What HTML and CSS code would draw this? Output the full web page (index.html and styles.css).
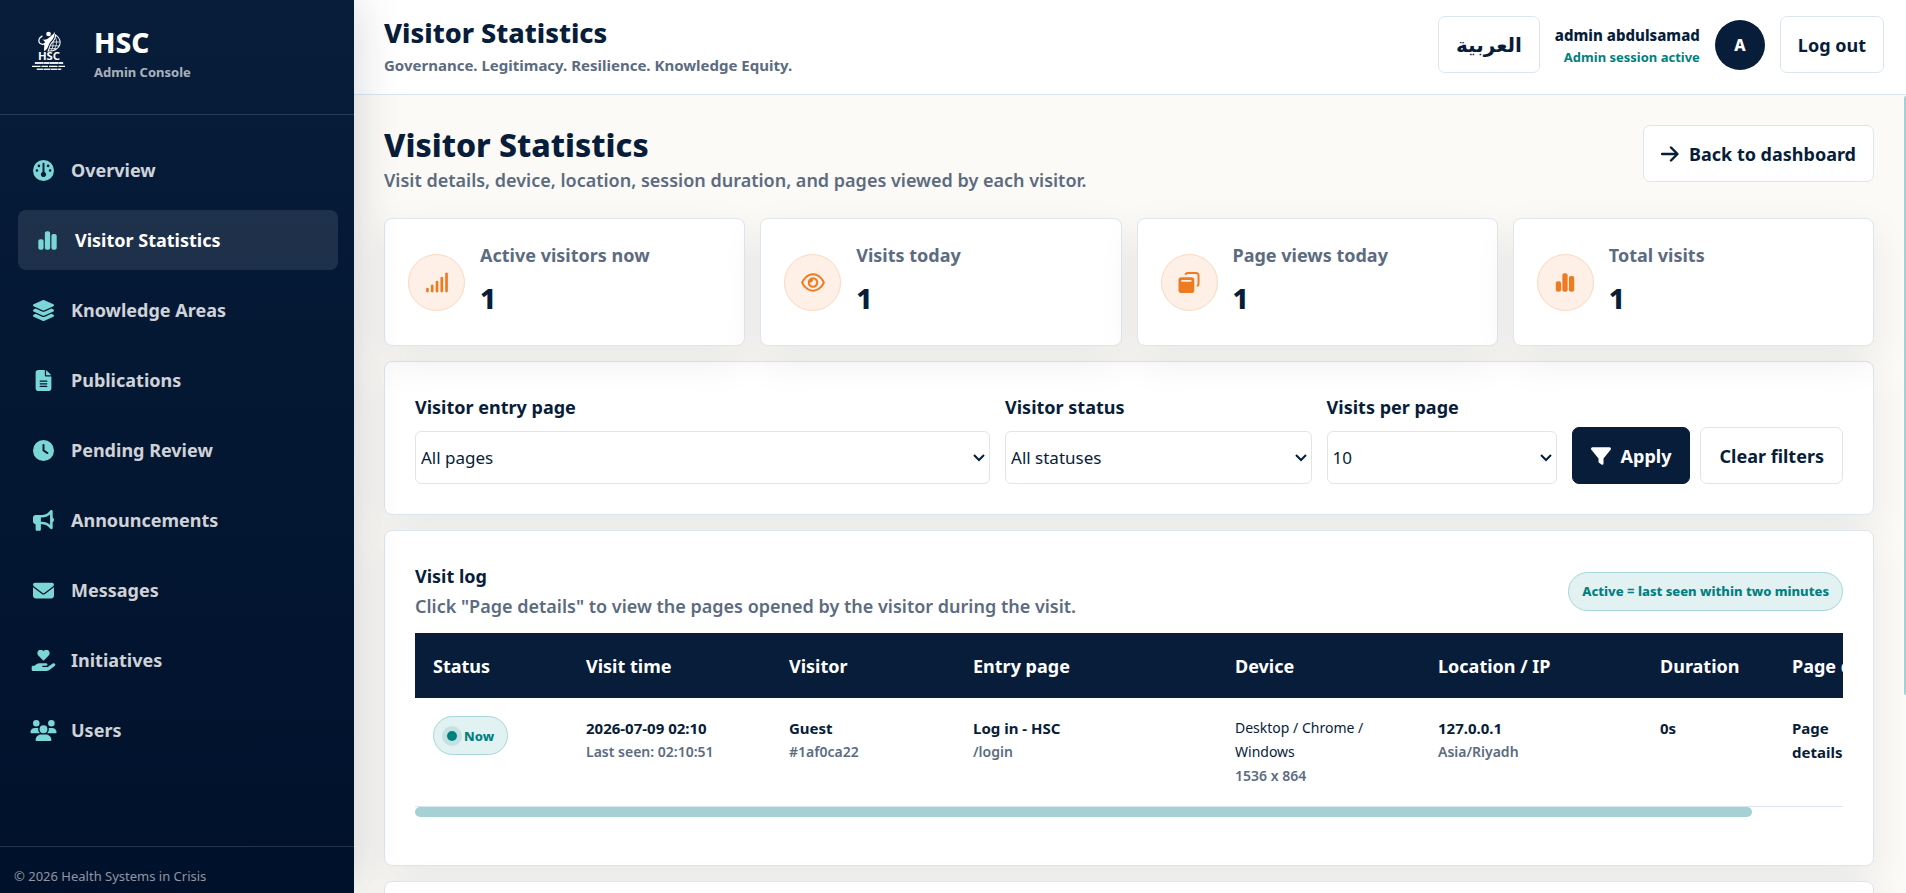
FILE: index.html
```html
<!DOCTYPE html>
<html lang="en">
<head>
  <meta charset="UTF-8">
  <meta name="viewport" content="width=device-width, initial-scale=1.0">
  <title>Visitor Statistics - HSC</title>
  <link rel="stylesheet" href="styles.css">
</head>
<body>

<div class="layout">
  <aside class="sidebar">
    <div class="brand">
      <svg class="logo" viewBox="0 0 36 42" aria-hidden="true">
        <circle cx="17.500" cy="3" r="2.500" fill="#fff"/>
        <path d="M11 5C6 8 6 13 11 14C12 14 13 13.500 14 12.500" fill="none" stroke="#fff" stroke-width="1.300"/>
        <path d="M10 8C12 10 16 9 18 7C20 5.500 22 4 24 1C24.500 6 22 9 19.500 11.500C17 14 18 18 13.500 21C11.500 20 14 16 12.500 14C15 12 14 11 10 8Z" fill="#fff"/>
        <path d="M25 4C29 7 31 11 29 15.500C27 19 23 21.500 17 21C19 17.500 18 16 20.500 13C23 10.500 25 8 25 4Z" fill="none" stroke="#fff" stroke-width="1.100"/>
        <path d="M19.500 15.500H29M22 11.500H29.500M22 21C26 17 27 11 25 7M18 18.500H26M20 21C22.500 17 22.500 14 22 11" fill="none" stroke="#fff" stroke-width="0.800"/>
        <text class="logo-text" x="18" y="31" text-anchor="middle" fill="#fff">HSC</text>
        <path d="M3 33.700H33" stroke="#fff" stroke-width="1.900" stroke-dasharray="9 0.300 6 0.300" opacity=".9"/>
        <path d="M0 37.300H36" stroke="#fff" stroke-width="1.400" stroke-dasharray="9 1 7 1"/>
        <path d="M5 40.300H31" stroke="#fff" stroke-width="1.600" stroke-dasharray="7 0.500" opacity=".9"/>
      </svg>
      <div class="brand-text">
        <strong class="brand-name">HSC</strong>
        <span class="brand-sub">Admin Console</span>
      </div>
    </div>

    <nav class="menu">
      <a href="#">
        <svg viewBox="0 0 512 512"><path fill-rule="evenodd" d="M0 256a256 256 0 1 1 512 0A256 256 0 1 1 0 256zM256 416c35 0 64-29 64-64c0-26-16-49-40-59V88c0-13-11-24-24-24s-24 11-24 24v205c-24 10-40 33-40 59c0 35 29 64 64 64zM176 144a32 32 0 1 0-64 0a32 32 0 1 0 64 0zM96 288a32 32 0 1 0 0-64a32 32 0 1 0 0 64zM448 256a32 32 0 1 0-64 0a32 32 0 1 0 64 0zM368 176a32 32 0 1 0 0-64a32 32 0 1 0 0 64z"/></svg>
        Overview</a>
      <a href="#" class="active">
        <svg viewBox="0 0 448 512"><path d="M160 80c0-26 22-48 48-48h32c26 0 48 22 48 48v352c0 26-22 48-48 48h-32c-26 0-48-22-48-48zM0 272c0-26 22-48 48-48h32c26 0 48 22 48 48v160c0 26-22 48-48 48H48c-26 0-48-22-48-48zM368 96h32c26 0 48 22 48 48v288c0 26-22 48-48 48h-32c-26 0-48-22-48-48V144c0-26 22-48 48-48z"/></svg>
        Visitor Statistics</a>
      <a href="#">
        <svg viewBox="0 0 576 512"><path d="M265 5c14-7 32-7 46 0l219 101c8 4 14 13 14 22s-6 18-14 22L311 251c-14 7-32 7-46 0L46 150c-8-4-14-13-14-22s6-18 14-22zM477 210l53 24c8 4 14 13 14 22s-6 18-14 22L311 379c-14 7-32 7-46 0L46 278c-8-4-14-13-14-22s6-18 14-22l53-24 153 70c23 11 49 11 72 0zM324 408l153-70 53 24c8 4 14 13 14 22s-6 18-14 22L311 507c-14 7-32 7-46 0L46 406c-8-4-14-13-14-22s6-18 14-22l53-24 153 70c23 11 49 11 72 0z"/></svg>
        Knowledge Areas</a>
      <a href="#">
        <svg viewBox="0 0 384 512"><path fill-rule="evenodd" d="M64 0C29 0 0 29 0 64v384c0 35 29 64 64 64h256c35 0 64-29 64-64V160H256c-18 0-32-14-32-32V0zM256 0v128h128zM112 256h160c9 0 16 7 16 16s-7 16-16 16H112c-9 0-16-7-16-16s7-16 16-16zm0 64h160c9 0 16 7 16 16s-7 16-16 16H112c-9 0-16-7-16-16s7-16 16-16zm0 64h160c9 0 16 7 16 16s-7 16-16 16H112c-9 0-16-7-16-16s7-16 16-16z"/></svg>
        Publications</a>
      <a href="#">
        <svg viewBox="0 0 512 512"><path fill-rule="evenodd" d="M256 0a256 256 0 1 1 0 512A256 256 0 1 1 256 0zm-24 120v136c0 8 4 16 11 20l96 64c11 7 26 4 33-7s4-26-7-33l-85-57V120c0-13-11-24-24-24s-24 11-24 24z"/></svg>
        Pending Review</a>
      <a href="#">
        <svg viewBox="0 0 512 512"><path fill-rule="evenodd" d="M480 32c0-13-8-25-20-30s-26-2-35 7l-45 46c-43 43-101 67-162 67H64c-35 0-64 29-64 64v96c0 35 29 64 64 64v128c0 18 14 32 32 32h64c18 0 32-14 32-32V346h26c61 0 119 24 162 68l45 45c9 9 23 12 35 7s20-17 20-30V300c19-9 32-33 32-60s-13-51-32-60zM416 109v250c-54-47-123-73-195-73h-29V182h29c72 0 141-26 195-73z"/></svg>
        Announcements</a>
      <a href="#">
        <svg viewBox="0 0 512 512"><path d="M48 64C22 64 0 86 0 112c0 15 7 29 19 38l218 164c11 8 27 8 38 0l218-164c12-9 19-23 19-38 0-26-22-48-48-48zM0 176v208c0 35 29 64 64 64h384c35 0 64-29 64-64V176L294 339c-23 18-53 18-76 0z"/></svg>
        Messages</a>
      <a href="#">
        <svg viewBox="0 0 576 512"><path d="M275 250c7 8 19 8 26 0l114-118c33-34 31-91-6-122-32-27-80-22-110 8l-11 12-11-12C247-12 199-17 167 10c-37 31-39 88-6 122zM568 336c13 18 9 43-8 56L433 485c-23 17-51 27-81 27H32c-18 0-32-14-32-32v-64c0-18 14-32 32-32h37l45-36c22-18 50-28 79-28h159c18 0 32 14 32 32s-14 32-32 32h-80c-9 0-16 7-16 16s7 16 16 16h120l120-88c18-13 43-10 56 8z"/></svg>
        Initiatives</a>
      <a href="#">
        <svg viewBox="0 0 640 512"><path d="M144 0a80 80 0 1 1 0 160A80 80 0 1 1 144 0zM512 0a80 80 0 1 1 0 160A80 80 0 1 1 512 0zM0 299c0-59 48-107 107-107h42c16 0 32 4 46 10-14 48 3 91 40 118H21c-12 0-21-9-21-21zM405 320c37-27 54-70 40-118 14-7 29-10 46-10h42c59 0 107 48 107 107 0 12-9 21-21 21zM224 224a96 96 0 1 1 192 0 96 96 0 1 1-192 0zM128 485c0-73 60-133 133-133h117c74 0 134 60 134 133 0 15-12 27-27 27H155c-15 0-27-12-27-27z"/></svg>
        Users</a>
    </nav>

    <div class="copyright">© 2026 Health Systems in Crisis</div>
  </aside>

  <div class="page">
    <header class="topbar">
      <div>
        <h2>Visitor Statistics</h2>
        <p>Governance. Legitimacy. Resilience. Knowledge Equity.</p>
      </div>
      <div class="account">
        <button class="btn btn-lang" lang="ar">العربية</button>
        <div class="user">
          <strong>admin abdulsamad</strong>
          <span>Admin session active</span>
        </div>
        <div class="avatar">A</div>
        <button class="btn">Log out</button>
      </div>
    </header>

    <div class="scroll-area">
    <main class="content">
      <div class="page-head">
        <div>
          <h1>Visitor Statistics</h1>
          <p>Visit details, device, location, session duration, and pages viewed by each visitor.</p>
        </div>
        <a href="#" class="btn">
          <svg viewBox="0 0 18 16" class="arrow"><path d="M1 8H16M10 1.500L16.500 8L10 14.500"/></svg>
          Back to dashboard</a>
      </div>

      <section class="stats">
        <div class="card stat">
          <div class="stat-icon">
            <svg viewBox="0 0 24 22"><path d="M2 18V20M7 14.500V20M12 10.500V20M17 6.500V20M22 2V20" fill="none" stroke="currentColor" stroke-width="2.800" stroke-linecap="round"/></svg>
          </div>
          <div><span>Active visitors now</span><strong>1</strong></div>
        </div>
        <div class="card stat">
          <div class="stat-icon">
            <svg viewBox="0 0 576 512"><path fill-rule="evenodd" d="M288 80c-65 0-119 30-159 68-38 35-64 77-78 108 14 31 40 73 78 108 40 38 94 68 159 68s119-30 159-68c38-35 64-77 78-108-14-31-40-73-78-108-40-38-94-68-159-68zM95 113C142 69 207 32 288 32s146 37 193 81c47 43 78 95 93 131 3 8 3 16 0 24-15 36-46 88-93 131-47 44-112 81-193 81S142 443 95 399C48 356 17 304 2 268c-3-8-3-16 0-24 15-36 46-88 93-131zM288 336c44 0 80-36 80-80s-36-80-80-80h-2c1 5 2 11 2 16 0 35-29 64-64 64-5 0-11-1-16-2v2c0 44 36 80 80 80zM288 128a128 128 0 1 1 0 256 128 128 0 1 1 0-256z"/></svg>
          </div>
          <div><span>Visits today</span><strong>1</strong></div>
        </div>
        <div class="card stat">
          <div class="stat-icon">
            <svg viewBox="0 0 512 512"><path fill-rule="evenodd" d="M144 64c8-37 40-64 80-64h208c44 0 80 36 80 80v208c0 40-27 72-64 80v-50c10-6 16-17 16-30V80c0-18-14-32-32-32H224c-13 0-24 6-30 16zM64 128h256c35 0 64 29 64 64v256c0 35-29 64-64 64H64c-35 0-64-29-64-64V192c0-35 29-64 64-64zM88 192c-13 0-24 11-24 24s11 24 24 24h208c13 0 24-11 24-24s-11-24-24-24z"/></svg>
          </div>
          <div><span>Page views today</span><strong>1</strong></div>
        </div>
        <div class="card stat">
          <div class="stat-icon">
            <svg viewBox="0 0 448 512"><path d="M160 80c0-26 22-48 48-48h32c26 0 48 22 48 48v352c0 26-22 48-48 48h-32c-26 0-48-22-48-48zM0 272c0-26 22-48 48-48h32c26 0 48 22 48 48v160c0 26-22 48-48 48H48c-26 0-48-22-48-48zM368 96h32c26 0 48 22 48 48v288c0 26-22 48-48 48h-32c-26 0-48-22-48-48V144c0-26 22-48 48-48z"/></svg>
          </div>
          <div><span>Total visits</span><strong>1</strong></div>
        </div>
      </section>

      <form class="card filters">
        <div class="field">
          <label for="entry-page">Visitor entry page</label>
          <select id="entry-page"><option>All pages</option></select>
        </div>
        <div class="field">
          <label for="status">Visitor status</label>
          <select id="status"><option>All statuses</option></select>
        </div>
        <div class="field">
          <label for="per-page">Visits per page</label>
          <select id="per-page"><option>10</option></select>
        </div>
        <div class="actions">
          <button type="button" class="btn btn-dark">
            <svg viewBox="0 0 512 512"><path d="M4 55C9 41 24 32 40 32h432c16 0 31 9 36 23s4 31-6 43L320 321v127c0 12-7 23-18 29s-24 4-34-3l-64-48c-8-6-12-16-12-26v-79L9 98C-1 86-3 69 4 55z"/></svg>
            Apply</button>
          <button type="reset" class="btn">Clear filters</button>
        </div>
      </form>

      <section class="card log">
        <div class="log-head">
          <div>
            <h3>Visit log</h3>
            <p>Click "Page details" to view the pages opened by the visitor during the visit.</p>
          </div>
          <span class="pill">Active = last seen within two minutes</span>
        </div>
        <div class="table-wrap">
          <table>
            <colgroup>
              <col class="c-status"><col class="c-time"><col class="c-visitor"><col class="c-entry">
              <col class="c-device"><col class="c-location"><col class="c-duration"><col class="c-pages">
            </colgroup>
            <thead>
              <tr>
                <th>Status</th>
                <th>Visit time</th>
                <th>Visitor</th>
                <th>Entry page</th>
                <th>Device</th>
                <th>Location / IP</th>
                <th>Duration</th>
                <th>Page details</th>
              </tr>
            </thead>
            <tbody>
              <tr>
                <td><span class="pill now">Now</span></td>
                <td><strong>2026-07-09 02:10</strong><small>Last seen: 02:10:51</small></td>
                <td><strong>Guest</strong><small>#1af0ca22</small></td>
                <td><strong>Log in - HSC</strong><small>/login</small></td>
                <td>Desktop / Chrome / Windows<small>1536 x 864</small></td>
                <td><strong>127.0.0.1</strong><small>Asia/Riyadh</small></td>
                <td><strong>0s</strong></td>
                <td><strong>Page<br>details</strong></td>
              </tr>
            </tbody>
          </table>
        </div>
        <div class="track-x"></div>
      </section>

      <section class="card next"></section>
    </main>
    <div class="track-y"></div>
    </div>
  </div>
</div>

</body>
</html>
```
FILE: styles.css
```css
* {
  box-sizing: border-box;
}
body {
  margin: 0;
  font-family: "Noto Sans", "Open Sans", "DejaVu Sans", sans-serif;
  font-size: 16px;
  line-height: 24px;
  color: #071d3a;
}
h1, h2, h3, p {
  margin: 0;
}
svg {
  fill: currentColor;
  flex-shrink: 0;
}
.layout {
  display: flex;
  height: 100vh;
  overflow: hidden;
}

/* sidebar */
.sidebar {
  display: flex;
  flex-direction: column;
  width: 354px;
  flex-shrink: 0;
  background: linear-gradient(180deg, #071d3a, #00112b);
  box-shadow: 0 0 45px rgba(7, 29, 58, 0.18);
  color: #fff;
  z-index: 2;
}
.brand {
  display: flex;
  align-items: center;
  gap: 28px;
  height: 115px;
  padding: 0 32px 12px;
  border-bottom: 1px solid rgba(255, 255, 255, 0.14);
}
.brand-text {
  padding-top: 6px;
}
.logo {
  width: 34px;
  height: 40px;
}
.logo-text {
  font-size: 12px;
  font-weight: 700;
}
.brand-name {
  display: block;
  font-size: 28px;
  line-height: 36px;
  font-weight: 800;
}
.brand-sub {
  display: block;
  font-size: 13px;
  font-weight: 700;
  color: rgba(255, 255, 255, 0.68);
}
.menu {
  flex: 1;
  display: flex;
  flex-direction: column;
  gap: 10px;
  padding: 25px 16px 0 18px;
}
.menu a {
  display: flex;
  align-items: center;
  gap: 14px;
  height: 60px;
  padding: 0 12px;
  border-radius: 8px;
  font-size: 18px;
  font-weight: 700;
  color: rgba(255, 255, 255, 0.82);
  text-decoration: none;
}
.menu svg {
  width: 27px;
  height: 21px;
  color: #7dd6d6;
}
.menu .active {
  padding: 0 16px;
  background: rgba(255, 255, 255, 0.1);
  color: #fff;
}
.copyright {
  height: 47px;
  padding: 17px 14px 0;
  border-top: 1px solid rgba(255, 255, 255, 0.14);
  font-size: 13px;
  color: rgba(255, 255, 255, 0.56);
}

/* top bar */
.page {
  flex: 1;
  min-width: 0;
  display: flex;
  flex-direction: column;
}
.topbar {
  display: flex;
  justify-content: space-between;
  align-items: flex-start;
  height: 95px;
  padding: 16px 22px 0 30px;
  background: #fff;
  border-bottom: 1px solid #dde6ef;
}
.topbar h2 {
  font-size: 27px;
  line-height: 34px;
  font-weight: 800;
}
.topbar p {
  font-size: 15px;
  line-height: 30px;
  font-weight: 700;
  color: #5c6b80;
}
.account {
  display: flex;
  align-items: center;
  gap: 15px;
}
.user {
  text-align: right;
}
.user strong {
  display: block;
  font-size: 15px;
  font-weight: 800;
}
.user span {
  display: block;
  font-size: 13px;
  line-height: 20px;
  font-weight: 700;
  color: #008080;
}
.avatar {
  display: flex;
  align-items: center;
  justify-content: center;
  width: 50px;
  height: 50px;
  border-radius: 50%;
  background: #071d3a;
  color: #fff;
  font-weight: 800;
}
.btn {
  display: inline-flex;
  align-items: center;
  justify-content: center;
  gap: 10px;
  height: 57px;
  padding: 0 17px;
  border: 1px solid #dde6ef;
  border-radius: 7px;
  background: #fff;
  color: #071d3a;
  font: inherit;
  font-size: 18px;
  font-weight: 700;
  text-decoration: none;
  white-space: nowrap;
  cursor: pointer;
}
.btn-lang {
  font-family: "DejaVu Sans", sans-serif;
  font-size: 20px;
}
.btn-dark {
  background: #071d3a;
  border-color: #071d3a;
  color: #fff;
}
.btn svg {
  width: 20px;
  height: 20px;
}
.btn .arrow {
  width: 18px;
  height: 16px;
  fill: none;
  stroke: currentColor;
  stroke-width: 2.4;
  stroke-linecap: round;
  stroke-linejoin: round;
}

/* content */
.scroll-area {
  flex: 1;
  min-height: 0;
  display: flex;
  background: #fbfaf6;
}
.content {
  flex: 1;
  min-width: 0;
  overflow-y: auto;
  padding: 30px 30px 0;
  scrollbar-width: none;
}
.track-y {
  width: 2px;
  height: 75%;
  margin-top: 1px;
  border-radius: 2px 0 0 2px;
  background: #a5d1d4;
}
.page-head {
  display: flex;
  justify-content: space-between;
  align-items: flex-start;
  height: 93px;
}
.page-head h1 {
  font-size: 32px;
  line-height: 40px;
  font-weight: 800;
}
.page-head p,
.log-head p {
  font-size: 18px;
  line-height: 30px;
  font-weight: 600;
  color: #5c6b80;
}
.card {
  margin-bottom: 15px;
  background: #fff;
  border: 1px solid #dde6ef;
  border-radius: 8px;
  box-shadow: 0 14px 40px rgba(7, 29, 58, 0.08);
}
.stats {
  display: grid;
  grid-template-columns: repeat(4, 1fr);
  gap: 15px;
}
.stat {
  display: flex;
  align-items: center;
  gap: 15px;
  height: 128px;
  padding: 0 23px;
}
.stat-icon {
  display: flex;
  align-items: center;
  justify-content: center;
  width: 57px;
  height: 57px;
  border: 1px solid #fad9c0;
  border-radius: 50%;
  background: #fef0e6;
  color: #ee7a22;
}
.stat-icon svg {
  width: 24px;
  height: 21px;
}
.stat span {
  display: block;
  font-size: 18px;
  line-height: 32px;
  font-weight: 700;
  color: #5c6b80;
}
.stat strong {
  display: block;
  font-size: 28px;
  line-height: 54px;
  font-weight: 800;
}

/* filters */
.filters {
  display: grid;
  grid-template-columns: 2.5fr 1.333fr 1fr auto;
  align-items: end;
  gap: 15px;
  padding: 30px;
}
.field label {
  display: block;
  padding: 3px 0 12px;
  font-size: 18px;
  font-weight: 700;
}
.field select {
  display: block;
  width: 100%;
  height: 53px;
  padding: 0 5px;
  border: 1px solid #dde6ef;
  border-radius: 6px;
  appearance: none;
  background: #fff url("data:image/svg+xml,%3Csvg xmlns='http://www.w3.org/2000/svg' width='12' height='8' viewBox='0 0 12 8'%3E%3Cpath d='M1 1L6 6L11 1' fill='none' stroke='%23071d3a' stroke-width='2'/%3E%3C/svg%3E") no-repeat right 4px center;
  color: #071d3a;
  font: inherit;
  font-size: 17px;
}
.actions {
  display: flex;
  gap: 10px;
}
.actions .btn {
  padding: 0 18px;
}

/* visit log */
.log {
  height: 336px;
  padding: 30px;
}
.log-head {
  display: flex;
  justify-content: space-between;
  align-items: center;
  height: 72px;
  padding-bottom: 12px;
}
.log-head h3 {
  font-size: 18px;
  line-height: 30px;
  font-weight: 700;
}
.pill {
  display: inline-flex;
  align-items: center;
  height: 39px;
  padding: 0 13px;
  border: 1px solid #a9d6d8;
  border-radius: 20px;
  background: #e2f1f2;
  color: #008080;
  font-size: 13px;
  font-weight: 800;
}
.now {
  gap: 7px;
}
.now::before {
  content: "";
  width: 10px;
  height: 10px;
  border-radius: 50%;
  background: #008080;
  box-shadow: 0 0 0 5px #c5e2e3;
}
.table-wrap {
  overflow-x: auto;
  scrollbar-width: none;
}
.track-x {
  width: 93.6%;
  height: 10px;
  border-radius: 5px;
  background: #a5d1d4;
}
table {
  width: 1524px;
  table-layout: fixed;
  border-collapse: collapse;
}
.c-status { width: 153px; }
.c-time { width: 203px; }
.c-visitor { width: 184px; }
.c-entry { width: 262px; }
.c-device { width: 203px; }
.c-location { width: 222px; }
.c-duration { width: 132px; }
th {
  height: 65px;
  padding: 0 18px;
  background: #071d3a;
  color: #fff;
  font-size: 18px;
  font-weight: 700;
  text-align: left;
  white-space: nowrap;
}
td {
  height: 108px;
  padding: 18px 18px 17px;
  border-bottom: 1px solid #dde6ef;
  vertical-align: top;
  font-size: 14px;
}
td strong,
td small {
  display: block;
}
td strong {
  font-size: 15px;
}
td small {
  font-size: 14px;
  font-weight: 600;
  color: #5c6b80;
}
.next {
  height: 500px;
}
```
